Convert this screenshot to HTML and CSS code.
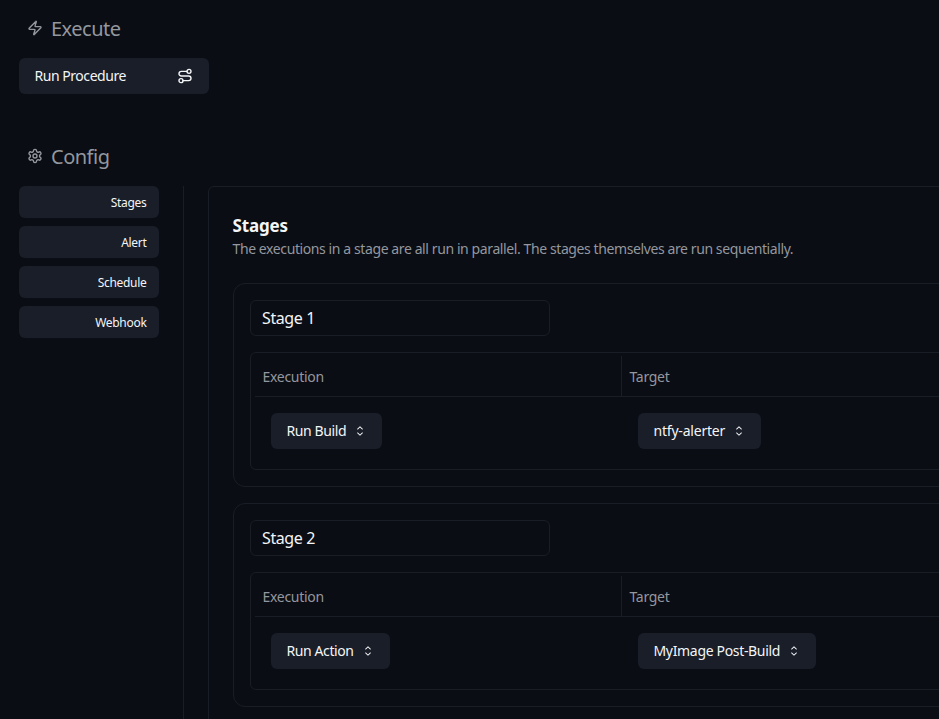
FILE: index.html
```html
<!DOCTYPE html>
<html lang="en">
<head>
<meta charset="utf-8">
<title>Procedure</title>
<link rel="stylesheet" href="styles.css">
</head>
<body>
<svg width="0" height="0" class="sprite">
  <symbol id="updown" viewBox="0 0 15 15"><path fill="currentColor" fill-rule="evenodd" clip-rule="evenodd" d="M4.93179 5.43179C4.75605 5.60753 4.75605 5.89245 4.93179 6.06819C5.10753 6.24392 5.39245 6.24392 5.56819 6.06819L7.49999 4.13638L9.43179 6.06819C9.60753 6.24392 9.89245 6.24392 10.0682 6.06819C10.2439 5.89245 10.2439 5.60753 10.0682 5.43179L7.81819 3.18179C7.64245 3.00605 7.35753 3.00605 7.18179 3.18179L4.93179 5.43179ZM10.0682 9.56819C10.2439 9.39245 10.2439 9.10753 10.0682 8.93179C9.89245 8.75606 9.60753 8.75606 9.43179 8.93179L7.49999 10.8636L5.56819 8.93179C5.39245 8.75606 5.10753 8.75606 4.93179 8.93179C4.75605 9.10753 4.75605 9.39245 4.93179 9.56819L7.18179 11.8182C7.35753 11.9939 7.64245 11.9939 7.81819 11.8182L10.0682 9.56819Z"/></symbol>
</svg>
<main class="page">
  <section class="execute">
    <h2 class="section-title">
      <svg class="icon" viewBox="0 0 24 24"><path d="M4 14a1 1 0 0 1-.78-1.63l9.9-10.2a.5.5 0 0 1 .86.46l-1.92 6.02A1 1 0 0 0 13 10h7a1 1 0 0 1 .78 1.63l-9.9 10.2a.5.5 0 0 1-.86-.46l1.92-6.02A1 1 0 0 0 11 14z"/></svg>
      <span>Execute</span>
    </h2>
    <button class="btn run">
      <span>Run Procedure</span>
      <svg class="icon" viewBox="0 0 24 24"><circle cx="6" cy="19" r="3"/><path d="M9 19h8.5a3.5 3.5 0 0 0 0-7h-11a3.5 3.5 0 0 1 0-7H15"/><circle cx="18" cy="5" r="3"/></svg>
    </button>
  </section>
  <section class="config">
    <h2 class="section-title">
      <svg class="icon" viewBox="0 0 24 24"><path d="M12.22 2h-.44a2 2 0 0 0-2 2v.18a2 2 0 0 1-1 1.73l-.43.25a2 2 0 0 1-2 0l-.15-.08a2 2 0 0 0-2.73.73l-.22.38a2 2 0 0 0 .73 2.73l.15.1a2 2 0 0 1 1 1.72v.51a2 2 0 0 1-1 1.74l-.15.09a2 2 0 0 0-.73 2.73l.22.38a2 2 0 0 0 2.73.73l.15-.08a2 2 0 0 1 2 0l.43.25a2 2 0 0 1 1 1.73V20a2 2 0 0 0 2 2h.44a2 2 0 0 0 2-2v-.18a2 2 0 0 1 1-1.73l.43-.25a2 2 0 0 1 2 0l.15.08a2 2 0 0 0 2.73-.73l.22-.39a2 2 0 0 0-.73-2.73l-.15-.08a2 2 0 0 1-1-1.74v-.5a2 2 0 0 1 1-1.74l.15-.09a2 2 0 0 0 .73-2.73l-.22-.38a2 2 0 0 0-2.73-.73l-.15.08a2 2 0 0 1-2 0l-.43-.25a2 2 0 0 1-1-1.73V4a2 2 0 0 0-2-2z"/><circle cx="12" cy="12" r="3"/></svg>
      <span>Config</span>
    </h2>
    <div class="columns">
      <nav class="side">
        <a class="btn tab">Stages</a>
        <a class="btn tab">Alert</a>
        <a class="btn tab">Schedule</a>
        <a class="btn tab">Webhook</a>
      </nav>
      <div class="panel">
        <h3 class="panel-title">Stages</h3>
        <p class="desc">The executions in a stage are all run in parallel. The stages themselves are run sequentially.</p>
        <div class="stages">
          <article class="stage">
            <div class="name">Stage 1</div>
            <div class="table">
              <div class="row head"><div class="cell">Execution</div><div class="cell">Target</div></div>
              <div class="row body">
                <div class="cell"><button class="btn pick w-build"><span>Run Build</span><svg class="chev"><use href="#updown"/></svg></button></div>
                <div class="cell"><button class="btn pick w-ntfy"><span>ntfy-alerter</span><svg class="chev"><use href="#updown"/></svg></button></div>
              </div>
            </div>
          </article>
          <article class="stage">
            <div class="name">Stage 2</div>
            <div class="table">
              <div class="row head"><div class="cell">Execution</div><div class="cell">Target</div></div>
              <div class="row body">
                <div class="cell"><button class="btn pick w-action"><span>Run Action</span><svg class="chev"><use href="#updown"/></svg></button></div>
                <div class="cell"><button class="btn pick w-image"><span>MyImage Post-Build</span><svg class="chev"><use href="#updown"/></svg></button></div>
              </div>
            </div>
          </article>
        </div>
      </div>
    </div>
  </section>
</main>
</body>
</html>
```
FILE: styles.css
```css
* { box-sizing: border-box; }
html, body { height: 100%; overflow: hidden; }
body {
  margin: 0;
  background: #0a0d14;
  color: #f4f5f7;
  font: 14px/20px "Noto Sans", sans-serif;
  letter-spacing: -0.4px;
}
.sprite { display: block; height: 0; }
.page { padding: 14px 0 0 19px; height: 719px; overflow: hidden; }
h2, h3, p { margin: 0; }
.section-title {
  display: flex; align-items: center; gap: 8px;
  height: 30px; padding-left: 8px;
  font-size: 20px; font-weight: 400; line-height: 28px; letter-spacing: -0.5px;
  color: #94979e;
}
.icon {
  width: 16px; height: 16px; flex: none; overflow: visible;
  fill: none; stroke: currentColor; stroke-width: 2.1;
  stroke-linecap: round; stroke-linejoin: round;
}
.section-title .icon { margin-bottom: 2px; }
.btn {
  display: flex; align-items: center;
  border: 0; border-radius: 6px;
  background: #191e29; color: #f4f5f7;
  font: inherit; letter-spacing: inherit; white-space: nowrap;
}
.run { width: 190px; height: 36px; margin-top: 14px; padding: 0 16px 0 15.5px; justify-content: space-between; letter-spacing: -0.46px; }
.config { margin-top: 48px; }
.columns { display: flex; margin-top: 14px; }
.side { width: 165px; height: 600px; flex: none; border-right: 1px solid #191d25; display: flex; flex-direction: column; gap: 8px; }
.tab { width: 140px; height: 32px; padding: 1px 12.5px 0; justify-content: flex-end; font-size: 12px; line-height: 16px; letter-spacing: -0.3px; }
.panel {
  flex: none; width: 800px; height: 600px; margin-left: 24px; padding: 27px 24px 0;
  border: 1px solid #191d25; border-radius: 6px;
}
.panel-title { font-size: 17px; line-height: 24px; font-weight: 700; letter-spacing: -0.15px; margin-left: -0.5px; }
.desc { color: #94979e; white-space: nowrap; padding-top: 1px; margin-left: -0.5px; }
.stages { display: flex; flex-direction: column; gap: 16px; margin-top: 24px; }
.stage { width: 760px; height: 204px; padding: 16px; border: 1px solid #191d25; border-radius: 12px; }
.name { width: 300px; height: 36px; border: 1px solid #191d25; border-radius: 6px; padding: 0 11px; font-size: 16px; line-height: 34px; }
.table { margin-top: 16px; height: 118px; border: 1px solid #191d25; border-radius: 6px; padding: 3px 4px 4px; }
.row { display: grid; grid-template-columns: 367px 1fr; }
.head { height: 41px; border-bottom: 1px solid #191d25; color: #94979e; letter-spacing: -0.3px; }
.head .cell { padding: 11px 7.5px 9px; }
.head .cell:first-child { border-right: 1px solid #191d25; }
.body .cell { padding: 16px; }
.pick { height: 36px; padding: 0 14px 0 15.5px; justify-content: space-between; }
.w-build { width: 111px; }
.w-ntfy { width: 123px; letter-spacing: -0.2px; }
.w-action { width: 119px; }
.w-image { width: 178px; letter-spacing: -0.33px; }
.chev { width: 16px; height: 16px; }
```
